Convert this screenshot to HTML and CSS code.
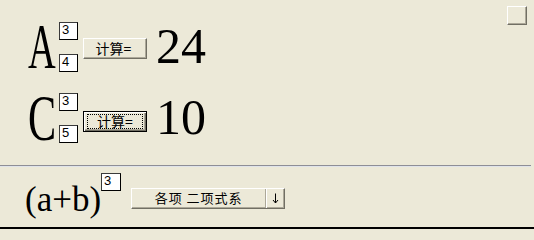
FILE: index.html
```html
<!DOCTYPE html>
<html lang="zh">
<head>
<meta charset="utf-8">
<title>二项式</title>
<link rel="stylesheet" href="styles.css">
</head>
<body>
<div class="app">
  <div class="top">
    <div class="rows">
      <div class="row">
        <div class="letter"><span class="glyph glyph-a">A</span></div>
        <div class="inputs">
          <div class="box">3</div>
          <div class="box">4</div>
        </div>
        <div class="btn">计算=</div>
        <div class="result">24</div>
      </div>
      <div class="row">
        <div class="letter"><span class="glyph glyph-c">C</span></div>
        <div class="inputs">
          <div class="box">3</div>
          <div class="box">5</div>
        </div>
        <div class="btn btn-focus"><span class="focus-rect">计算=</span></div>
        <div class="result">10</div>
      </div>
    </div>
    <div class="corner"></div>
  </div>
  <div class="sep"></div>
  <div class="bottom">
    <div class="expr">(a+b)</div>
    <div class="box sup">3</div>
    <div class="combo">
      <span class="combo-text">各项 二项式系</span>
      <span class="combo-arrow">
        <svg width="7" height="11" viewBox="0 0 7 11"><path d="M3.5 0.5V10 M1 7 L3.5 10 L6 7" fill="none" stroke="#000" stroke-width="1"/></svg>
      </span>
    </div>
  </div>
</div>
</body>
</html>
```

FILE: styles.css
```css
html, body {
  margin: 0;
  padding: 0;
  background: #ECE9D8;
}

.app {
  width: 534px;
  height: 229px;
  box-sizing: border-box;
  border-bottom: 2px solid #000;
  display: flex;
  flex-direction: column;
  background: #ECE9D8;
  color: #000;
  overflow: hidden;
}

.top {
  height: 165px;
  display: flex;
  justify-content: space-between;
  align-items: flex-start;
}

.rows {
  padding-top: 22px;
  padding-left: 28px;
  display: flex;
  flex-direction: column;
  gap: 21px;
}

.row {
  display: flex;
  align-items: flex-start;
  height: 50px;
}

.letter {
  width: 31px;
  height: 50px;
  font-family: "Liberation Serif", "Times New Roman", serif;
  font-size: 64px;
  line-height: 50px;
  overflow: visible;
  white-space: nowrap;
}

.glyph {
  display: inline-block;
  transform-origin: left center;
}

.glyph-a { transform: scaleX(0.6); }
.glyph-c { transform: scale(0.66, 1.04); }

.inputs {
  width: 19px;
  height: 50px;
  display: flex;
  flex-direction: column;
  justify-content: space-between;
}

.box {
  width: 19px;
  height: 18px;
  box-sizing: border-box;
  background: #fff;
  border: 1px solid #000;
  border-top-color: #3a3a3a;
  border-left-color: #3a3a3a;
  font-family: "Liberation Sans", sans-serif;
  font-size: 13px;
  line-height: 14px;
  padding-left: 2px;
}

.btn {
  margin-left: 5px;
  margin-top: 16px;
  width: 64px;
  height: 21px;
  box-sizing: border-box;
  background: #ECE9D8;
  border: 1px solid;
  border-color: #fff #716F64 #716F64 #fff;
  box-shadow: inset -1px -1px 0 #ACA899;
  font-family: "Noto Sans CJK SC", sans-serif;
  font-size: 14px;
  line-height: 18px;
  text-align: center;
  padding-right: 3px;
}

.btn-focus {
  margin-top: 18px;
  border: 1px solid #000;
  box-shadow: inset 1px 1px 0 #fff, inset -1px -1px 0 #716F64, inset -2px -2px 0 #ACA899;
  padding: 2px 3px;
  line-height: 13px;
}

.focus-rect {
  display: block;
  height: 15px;
  box-sizing: border-box;
  border: 1px dotted #000;
  line-height: 13px;
}

.result {
  margin-left: 9px;
  margin-top: -1px;
  font-family: "Liberation Serif", "Times New Roman", serif;
  font-size: 50px;
  line-height: 50px;
}

.corner {
  margin-top: 6px;
  margin-right: 7px;
  width: 20px;
  height: 19px;
  box-sizing: border-box;
  border: 1px solid;
  border-color: #fff #716F64 #716F64 #fff;
  box-shadow: inset -1px -1px 0 #ACA899;
}

.sep {
  height: 0;
  border-top: 1px solid #8e8e96;
  border-bottom: 1px solid #dfe3ea;
  margin-right: 3px;
}

.bottom {
  display: flex;
  align-items: flex-start;
  padding-top: 6px;
  padding-left: 25px;
}

.expr {
  margin-top: 7px;
  font-family: "Liberation Serif", "Times New Roman", serif;
  font-size: 35px;
  line-height: 40px;
  white-space: nowrap;
}

.sup {
  width: 20px;
  margin-left: 0;
}

.combo {
  margin-left: 10px;
  margin-top: 15px;
  width: 154px;
  height: 21px;
  box-sizing: border-box;
  display: flex;
  background: #ECE9D8;
  border: 1px solid;
  border-color: #fff #716F64 #716F64 #fff;
  box-shadow: inset -1px -1px 0 #ACA899;
}

.combo-text {
  width: 134px;
  box-sizing: border-box;
  border-right: 1px solid #ACA899;
  text-align: center;
  font-family: "Noto Sans CJK SC", sans-serif;
  font-size: 13px;
  letter-spacing: 1px;
  line-height: 18px;
}

.combo-arrow {
  flex: 1;
  display: flex;
  align-items: center;
  justify-content: center;
  border-left: 1px solid #fff;
}

.combo-arrow svg {
  display: block;
}
```
